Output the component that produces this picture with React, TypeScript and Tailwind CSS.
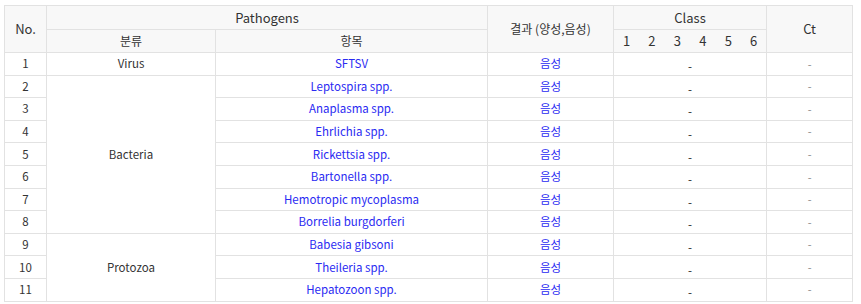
import React from "react";

const rows = [
  { no: 1, item: "SFTSV" },
  { no: 2, item: "Leptospira spp." },
  { no: 3, item: "Anaplasma spp." },
  { no: 4, item: "Ehrlichia spp." },
  { no: 5, item: "Rickettsia spp." },
  { no: 6, item: "Bartonella spp." },
  { no: 7, item: "Hemotropic mycoplasma" },
  { no: 8, item: "Borrelia burgdorferi" },
  { no: 9, item: "Babesia gibsoni" },
  { no: 10, item: "Theileria spp." },
  { no: 11, item: "Hepatozoon spp." },
];

const groups: Record<number, { label: string; span: number }> = {
  1: { label: "Virus", span: 1 },
  2: { label: "Bacteria", span: 7 },
  9: { label: "Protozoa", span: 3 },
};

const td = "border border-[#e2e2e2] text-center align-middle p-0";
const th = "border border-[#e2e2e2] text-center align-middle p-0 font-normal bg-[#f8f8f8] text-[#333]";

export default function App() {
  return (
    <div
      className="bg-white pl-[4px] pt-[5px] w-[861px] h-[304px]"
      style={{ fontFamily: '"Noto Sans CJK KR", "Noto Sans", sans-serif' }}
    >
      <table className="table-fixed border-collapse w-[848px] text-[11.5px] text-[#333]">
        <colgroup>
          <col className="w-[42px]" />
          <col className="w-[169px]" />
          <col className="w-[272px]" />
          <col className="w-[126px]" />
          <col className="w-[25.5px]" />
          <col className="w-[25.5px]" />
          <col className="w-[25.5px]" />
          <col className="w-[25.5px]" />
          <col className="w-[25.5px]" />
          <col className="w-[25.5px]" />
          <col className="w-[86px]" />
        </colgroup>
        <thead>
          <tr className="h-[24px]">
            <th rowSpan={2} className={`${th} text-[13px]`}>No.</th>
            <th colSpan={2} className={`${th} text-[13px]`}>Pathogens</th>
            <th rowSpan={2} className={`${th} text-[12px]`}>결과 (양성,음성)</th>
            <th colSpan={6} className={`${th} text-[13px]`}>Class</th>
            <th rowSpan={2} className={`${th} text-[13px]`}>Ct</th>
          </tr>
          <tr className="h-[23px]">
            <th className={`${th} text-[12px]`}>분류</th>
            <th className={`${th} text-[12px]`}>항목</th>
            {[1, 2, 3, 4, 5, 6].map((n) => (
              <th key={n} className={`bg-[#f8f8f8] border-y border-[#e2e2e2] text-center font-normal text-[13px] text-[#333] p-0 ${n === 1 ? "border-l" : ""} ${n === 6 ? "border-r" : ""}`}>
                {n}
              </th>
            ))}
          </tr>
        </thead>
        <tbody>
          {rows.map((r) => (
            <tr key={r.no} className="h-[22.6px]">
              <td className={td}>{r.no}</td>
              {groups[r.no] && (
                <td rowSpan={groups[r.no].span} className={td}>
                  {groups[r.no].label}
                </td>
              )}
              <td className={`${td} text-[#2a2af2]`}>{r.item}</td>
              <td className={`${td} text-[#2a2af2]`}>음성</td>
              <td colSpan={6} className={td}>
                <span className="relative top-[3px] text-[#222]">-</span>
              </td>
              <td className={`${td} text-[#888] text-[11px]`}>-</td>
            </tr>
          ))}
        </tbody>
      </table>
    </div>
  );
}
